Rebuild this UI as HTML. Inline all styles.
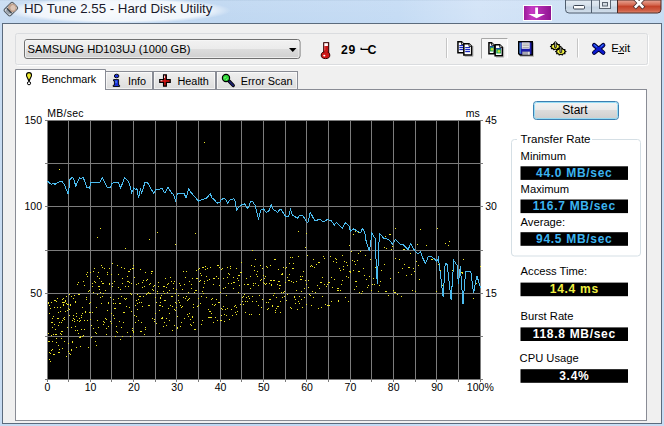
<!DOCTYPE html><html><head><meta charset="utf-8"><style>html,body{margin:0;padding:0;background:#c7dcf1;overflow:hidden}svg{display:block}text{font-family:"Liberation Sans",sans-serif}</style></head><body>
<svg width="664" height="426" viewBox="0 0 664 426">
<defs>
<linearGradient id="gFrame" x1="0" y1="0" x2="1" y2="0"><stop offset="0" stop-color="#c8dcf2"/><stop offset="0.33" stop-color="#bfd7f1"/><stop offset="0.6" stop-color="#c4dbf4"/><stop offset="0.72" stop-color="#d2e3f7"/><stop offset="0.85" stop-color="#cde0f5"/><stop offset="1" stop-color="#c6dcf3"/></linearGradient><linearGradient id="gFrameV" x1="0" y1="0" x2="0" y2="1"><stop offset="0" stop-color="#000" stop-opacity="0.02"/><stop offset="0.05" stop-color="#fff" stop-opacity="0.08"/><stop offset="1" stop-color="#fff" stop-opacity="0"/></linearGradient>
<radialGradient id="gGlow" cx="0.5" cy="0.5" r="0.5"><stop offset="0" stop-color="#ffffff" stop-opacity="0.9"/><stop offset="0.8" stop-color="#ffffff" stop-opacity="0.75"/><stop offset="1" stop-color="#ffffff" stop-opacity="0"/></radialGradient>
<linearGradient id="gCombo" x1="0" y1="0" x2="0" y2="1"><stop offset="0" stop-color="#f2f2f2"/><stop offset="0.5" stop-color="#ebebeb"/><stop offset="0.5" stop-color="#dddddd"/><stop offset="1" stop-color="#cfcfcf"/></linearGradient>
<linearGradient id="gTab" x1="0" y1="0" x2="0" y2="1"><stop offset="0" stop-color="#f0f0f0"/><stop offset="1" stop-color="#dcdcdc"/></linearGradient>
<linearGradient id="gBtn" x1="0" y1="0" x2="0" y2="1"><stop offset="0" stop-color="#f4f4f4"/><stop offset="0.5" stop-color="#e9e9e9"/><stop offset="0.5" stop-color="#dcdcdc"/><stop offset="1" stop-color="#cdcdcd"/></linearGradient>
<linearGradient id="gWB" x1="0" y1="0" x2="0" y2="1"><stop offset="0" stop-color="#e4ecf4"/><stop offset="0.45" stop-color="#d4dfea"/><stop offset="0.55" stop-color="#c2d1e0"/><stop offset="1" stop-color="#d2dfec"/></linearGradient>
<linearGradient id="gClose" x1="0" y1="0" x2="0" y2="1"><stop offset="0" stop-color="#e8a898"/><stop offset="0.35" stop-color="#d66c55"/><stop offset="0.5" stop-color="#c4432a"/><stop offset="0.8" stop-color="#cf5e45"/><stop offset="1" stop-color="#e08c74"/></linearGradient>
<linearGradient id="gPurple" x1="0" y1="0" x2="1" y2="0"><stop offset="0" stop-color="#9a1a98"/><stop offset="0.3" stop-color="#c63ac4"/><stop offset="1" stop-color="#8e1390"/></linearGradient>
</defs>
<rect width="664" height="426" fill="url(#gFrame)"/><rect width="664" height="24" fill="url(#gFrameV)"/>
<ellipse cx="117" cy="10.5" rx="114" ry="13" fill="url(#gGlow)"/>

<g transform="translate(10.85,9.1) rotate(45)">
<rect x="-4.4" y="-6.1" width="8.8" height="12.2" rx="1.6" fill="#dfe5ea" stroke="#535b63" stroke-width="1.1"/>
<rect x="-2.6" y="2.6" width="5.2" height="2.6" fill="#9aa2aa"/>
<circle cx="0.2" cy="-1.8" r="4.4" fill="#bea08c"/>
<circle cx="0.6" cy="-2.4" r="2.6" fill="#dcc4b4"/>
<rect x="-3.4" y="1.6" width="6.8" height="1.4" fill="#3b4249"/>
</g>
<text x="24" y="12.7" font-size="13.3" fill="#1a1a2a">HD Tune 2.55 - Hard Disk Utility</text>
<rect x="523.5" y="5.5" width="28" height="15" fill="url(#gPurple)" stroke="#ffffff" stroke-width="1"/>
<path d="M535.2 7.5h2.8v6.6h7.2l-8.6 4.2l-8.2-4.2h6.8z" fill="#ffffff"/>
<path d="M565.5 0 V9.5 q0 3.5 3.5 3.5 H591.5 V0z" fill="url(#gWB)" stroke="#4f5d6e" stroke-width="1"/>
<path d="M591.5 0 V13 H617.5 V0z" fill="url(#gWB)" stroke="#4f5d6e" stroke-width="1"/>
<path d="M617.5 0 V13 H657.5 q3.5 0 3.5-3.5 V0z" fill="url(#gClose)" stroke="#4a2a26" stroke-width="1"/>
<rect x="573.5" y="5.5" width="11" height="3.5" rx="1" fill="#ffffff" stroke="#3c4654" stroke-width="1"/>
<rect x="599.5" y="-1.5" width="11" height="10" fill="#e8eef4" stroke="#5a6470" stroke-width="1"/>
<rect x="602.5" y="2.5" width="5" height="3.5" fill="#d0d8e0" stroke="#5a6470" stroke-width="1"/>
<path d="M635.8 -0.5 L642.4 6.6 M642.4 -0.5 L635.8 6.6" stroke="#4a3030" stroke-width="4.2" stroke-linecap="square"/><path d="M635.8 -0.5 L642.4 6.6 M642.4 -0.5 L635.8 6.6" stroke="#ffffff" stroke-width="2.6" stroke-linecap="square"/>

<rect x="2.5" y="23.5" width="659" height="400" fill="#f0f0f0" stroke="#5b6b7d" stroke-width="1"/>
<rect x="16.5" y="34.5" width="632" height="31" rx="2" fill="none" stroke="#ffffff" stroke-width="1"/>
<rect x="15.5" y="33.5" width="632" height="31" rx="2" fill="#f0f0f0" stroke="#dadcdf" stroke-width="1"/>
<rect x="24.5" y="39.5" width="275.5" height="19" rx="2.5" fill="url(#gCombo)" stroke="#707070" stroke-width="1"/>
<rect x="25.5" y="40.5" width="273.5" height="17" rx="1.5" fill="none" stroke="#f8f8f8" stroke-width="1" opacity="0.7"/>
<text x="27.5" y="52.6" font-size="11.2" fill="#000">SAMSUNG HD103UJ (1000 GB)</text>
<path d="M289 48 h7.5 l-3.75 4z" fill="#000"/>
<rect x="323.7" y="42.7" width="5" height="11" fill="#c81818" stroke="#2a0000" stroke-width="1"/>
<rect x="324.3" y="43.2" width="3.6" height="2.8" fill="#ffffff"/>
<rect x="324.3" y="46" width="1" height="7" fill="#e86060"/>
<ellipse cx="325.5" cy="55.2" rx="4.3" ry="3.4" fill="#d01818" stroke="#2a0000" stroke-width="1"/>
<rect x="324.4" y="50" width="3.2" height="4" fill="#c81818"/>
<ellipse cx="324.3" cy="55.6" rx="1.1" ry="0.9" fill="#ffffff"/>
<text x="341" y="54" font-size="12.2" font-weight="bold" fill="#000" letter-spacing="0.6">29</text><path d="M360.5 50.1 v-2.3 h1.3 v1 h6.6 v1.3z" fill="#000"/><text x="367.6" y="54" font-size="12.4" font-weight="bold" fill="#000">C</text>
<rect x="446" y="38" width="1" height="20" fill="#c5c5c5"/><rect x="447" y="38" width="1" height="20" fill="#ffffff"/>
<rect x="577" y="38.5" width="1" height="19" fill="#c5c5c5"/><rect x="578" y="38.5" width="1" height="19" fill="#ffffff"/>
<path d="M473.00 45.9 v10.50 h-8.30" fill="none" stroke="#a0a0a0" stroke-width="1" opacity="0.7"/><path d="M457.95 41.85 h3.60 l2.7 2.7 v8.20 h-6.30z" fill="#ffffff" stroke="#000" stroke-width="1.5" stroke-linejoin="miter"/><path d="M461.55 41.85 v2.7 h2.7" fill="#d0d0d0" stroke="#000" stroke-width="0.8"/><rect x="459.3" y="45.0" width="3.8" height="1.2" fill="#1828c0"/><rect x="459.3" y="47.0" width="3.8" height="1.2" fill="#1828c0"/><rect x="459.3" y="49.0" width="3.8" height="1.2" fill="#1828c0"/>
<path d="M463.85 43.65 h5.10 l2.7 2.7 v8.70 h-7.80z" fill="#ffffff" stroke="#000" stroke-width="1.5" stroke-linejoin="miter"/><path d="M468.95 43.65 v2.7 h2.7" fill="#d0d0d0" stroke="#000" stroke-width="0.8"/><rect x="465.2" y="47.0" width="4.8" height="1.2" fill="#1828c0"/><rect x="465.2" y="49.0" width="4.8" height="1.2" fill="#1828c0"/><rect x="465.2" y="51.0" width="4.8" height="1.2" fill="#1828c0"/>
<rect x="481" y="38" width="27" height="20.5" fill="#f6f6f6"/><path d="M481.5 58.5 V38.5 H508" fill="none" stroke="#a8a8a8" stroke-width="1"/><path d="M507.5 38.5 V58" fill="none" stroke="#ffffff" stroke-width="1"/>
<path d="M503.70 46.9 v10.30 h-7.70" fill="none" stroke="#a0a0a0" stroke-width="1" opacity="0.7"/><path d="M488.95 42.65 h2.60 l2.7 2.7 v8.50 h-5.30z" fill="#ffffff" stroke="#000" stroke-width="1.5" stroke-linejoin="miter"/><path d="M491.55 42.65 v2.7 h2.7" fill="#d0d0d0" stroke="#000" stroke-width="0.8"/><rect x="490" y="46" width="3.4" height="5.5" fill="#28a860"/><rect x="490" y="46" width="3.4" height="1.3" fill="#1848a0"/><circle cx="492.10" cy="49.35" r="1.3" fill="#c8e030"/>
<path d="M495.15 44.65 h4.50 l2.7 2.7 v8.50 h-7.20z" fill="#ffffff" stroke="#000" stroke-width="1.5" stroke-linejoin="miter"/><path d="M499.65 44.65 v2.7 h2.7" fill="#d0d0d0" stroke="#000" stroke-width="0.8"/><rect x="496.2" y="48" width="4.8" height="5.5" fill="#28a860"/><rect x="496.2" y="48" width="4.8" height="1.3" fill="#1848a0"/><circle cx="499.00" cy="51.35" r="1.3" fill="#c8e030"/>
<path d="M533.5 42.5 V56.5 H520" fill="none" stroke="#b0b0b0" stroke-width="1" opacity="0.8"/>
<path d="M518.75 41.75 H532.25 V55 H520.2 L518.75 53.6z" fill="#1c1ca8" stroke="#000" stroke-width="1.5"/>
<rect x="519.6" y="42.6" width="1" height="11" fill="#58b8e8"/>
<rect x="521.7" y="42.4" width="8" height="6.4" fill="#e8e8e8"/>
<rect x="522.5" y="43.6" width="6.4" height="0.8" fill="#a0a0a0"/><rect x="522.5" y="45.3" width="6.4" height="0.8" fill="#a0a0a0"/><rect x="522.5" y="47" width="6.4" height="0.8" fill="#a0a0a0"/>
<rect x="522.3" y="51.6" width="7.7" height="3.2" fill="#a8a8b0"/><rect x="528" y="51.9" width="1.4" height="2.6" fill="#e0e0e0"/>
<polygon points="566.00,51.60 564.46,52.41 565.01,53.68 563.06,53.72 562.41,54.96 560.80,54.22 559.19,54.96 558.54,53.72 556.59,53.68 557.14,52.41 555.60,51.60 557.14,50.79 556.59,49.52 558.54,49.48 559.19,48.24 560.80,48.98 562.41,48.24 563.06,49.48 565.01,49.52 564.46,50.79" fill="#f0f040" stroke="#000" stroke-width="1.1" stroke-linejoin="round"/><path d="M559.90 52.40 V47.00 q0.9-1 1.8 0 V52.40z" fill="#b8b8a8" stroke="#000" stroke-width="0.8"/><polygon points="560.40,46.60 558.92,47.38 559.45,48.60 557.57,48.64 556.95,49.83 555.40,49.12 553.85,49.83 553.23,48.64 551.35,48.60 551.88,47.38 550.40,46.60 551.88,45.82 551.35,44.60 553.23,44.56 553.85,43.37 555.40,44.08 556.95,43.37 557.57,44.56 559.45,44.60 558.92,45.82" fill="#f0f040" stroke="#000" stroke-width="1.1" stroke-linejoin="round"/><path d="M554.50 47.40 V42.00 q0.9-1 1.8 0 V47.40z" fill="#b8b8a8" stroke="#000" stroke-width="0.8"/>
<g stroke-linecap="round"><path d="M594.2 45.2 L603.2 52.6 M603.2 45.2 L594.2 52.6" stroke="#000030" stroke-width="4.4"/><path d="M594.2 45.2 L603.2 52.6 M603.2 45.2 L594.2 52.6" stroke="#0c1ad0" stroke-width="2.6"/><path d="M594.4 44.9 L596.6 46.8 M603 44.9 L601 46.6" stroke="#58b8ff" stroke-width="0.8"/></g>
<text x="611.3" y="52.2" font-size="11.4" fill="#000">Exit</text>
<rect x="618" y="53" width="6" height="1" fill="#000"/>
<rect x="15.5" y="89.5" width="631" height="331" fill="#ffffff" stroke="#898c95" stroke-width="1"/>
<rect x="105.5" y="71.5" width="47.0" height="18" fill="url(#gTab)" stroke="#898c95" stroke-width="1"/>
<rect x="106.5" y="72.5" width="45.0" height="16" fill="none" stroke="#ffffff" stroke-width="1" opacity="0.6"/>
<text x="128" y="84.9" font-size="10.85" fill="#000">Info</text>
<rect x="153.5" y="71.5" width="62.0" height="18" fill="url(#gTab)" stroke="#898c95" stroke-width="1"/>
<rect x="154.5" y="72.5" width="60.0" height="16" fill="none" stroke="#ffffff" stroke-width="1" opacity="0.6"/>
<text x="177.5" y="84.9" font-size="10.85" fill="#000">Health</text>
<rect x="216.5" y="71.5" width="81.0" height="18" fill="url(#gTab)" stroke="#898c95" stroke-width="1"/>
<rect x="217.5" y="72.5" width="79.0" height="16" fill="none" stroke="#ffffff" stroke-width="1" opacity="0.6"/>
<text x="240.7" y="84.9" font-size="10.85" fill="#000">Error Scan</text>
<path d="M15.5 90 V69.5 H105.5 V90" fill="#ffffff" stroke="#898c95" stroke-width="1"/>
<rect x="16" y="70" width="89" height="21" fill="#ffffff"/>
<text x="41.6" y="82.5" font-size="10.8" fill="#000">Benchmark</text>
<path d="M29 72.6 c-1.7 0 -2.5 1.2 -2.5 2.6 c0 1.7 1.3 2.8 1.9 4.8 h1.2 c0.6-2 1.9-3.1 1.9-4.8 c0-1.4-0.8-2.6-2.5-2.6z" fill="#eeea30" stroke="#000" stroke-width="1.1"/>
<rect x="28.1" y="79.8" width="1.8" height="1.6" fill="#000"/>
<circle cx="29" cy="83.2" r="1.6" fill="#ffffff" stroke="#000" stroke-width="1"/>
<ellipse cx="116.6" cy="76" rx="2.3" ry="1.8" fill="#1a30d8" stroke="#000" stroke-width="0.9"/>
<path d="M113.6 79.6 h5 v5.6 h1 v1.3 h-6.4 v-1.3 h1.2 v-4.2 h-0.8z" fill="#1a30d8" stroke="#000" stroke-width="0.9"/>
<rect x="115.6" y="80.6" width="0.9" height="2.5" fill="#60b0ff"/>
<path d="M163.6 74.8 h2.7 v4.8 h3.9 v2.7 h-3.9 v3.9 h-2.7 v-3.9 h-3.8 v-2.7 h3.8z" fill="#e41414" stroke="#000" stroke-width="1.3"/><rect x="164" y="75.6" width="1" height="2.4" fill="#ffffff" opacity="0.8"/><rect x="160.4" y="80.2" width="2" height="1" fill="#ffffff" opacity="0.8"/>
<line x1="229" y1="81" x2="233.2" y2="85.4" stroke="#000" stroke-width="3.4" stroke-linecap="round"/>
<line x1="229" y1="81" x2="233.2" y2="85.4" stroke="#1c2270" stroke-width="1.8" stroke-linecap="round"/>
<circle cx="226" cy="78" r="3.6" fill="#30d838" stroke="#000" stroke-width="1.2"/>
<path d="M224.2 78.4 l1.4-1.6 M226.4 79.8 l1.2-1.2" stroke="#b0ffb0" stroke-width="0.9"/>
<rect x="47" y="120" width="434" height="260" fill="#000"/>
<path d="M47.5 120 V382M68.5 120 V382M90.5 120 V382M111.5 120 V382M133.5 120 V382M155.5 120 V382M176.5 120 V382M198.5 120 V382M220.5 120 V382M241.5 120 V382M263.5 120 V382M285.5 120 V382M306.5 120 V382M328.5 120 V382M350.5 120 V382M371.5 120 V382M393.5 120 V382M415.5 120 V382M436.5 120 V382M458.5 120 V382M480.5 120 V382M45 120.5 H483M45 163.5 H483M45 206.5 H483M45 250.5 H483M45 293.5 H483M45 336.5 H483M45 379.5 H483" stroke="#7c7c7c" stroke-width="1" fill="none"/>
<path d="M48 341h2v1h-2zM48 333h1v1h-1zM48 303h1v1h-1zM48 302h1v1h-1zM49 305h1v1h-1zM49 352h1v1h-1zM49 313h1v1h-1zM49 359h1v1h-1zM50 361h1v1h-1zM50 353h1v1h-1zM50 308h1v1h-1zM51 350h1v1h-1zM51 335h1v1h-1zM51 322h2v1h-2zM51 302h1v1h-1zM52 341h1v1h-1zM52 318h1v1h-1zM52 327h1v1h-1zM52 349h1v1h-1zM53 334h1v1h-1zM53 354h2v1h-2zM53 316h1v1h-1zM54 324h1v1h-1zM54 307h1v1h-1zM54 300h2v1h-2zM55 334h2v1h-2zM55 329h1v1h-1zM55 334h1v1h-1zM56 342h1v1h-1zM56 301h1v1h-1zM56 338h1v1h-1zM57 318h2v1h-2zM57 298h1v1h-1zM57 307h1v1h-1zM58 345h1v1h-1zM58 312h1v1h-1zM58 352h1v1h-1zM58 325h1v1h-1zM59 349h1v1h-1zM59 322h1v1h-1zM59 352h1v1h-1zM60 307h1v1h-1zM60 311h1v1h-1zM60 333h1v1h-1zM61 322h1v1h-1zM61 331h2v1h-2zM61 334h1v1h-1zM61 338h1v1h-1zM62 348h1v1h-1zM62 320h1v1h-1zM62 302h2v1h-2zM62 299h1v1h-1zM63 305h1v1h-1zM63 298h1v1h-1zM63 304h1v1h-1zM63 318h1v1h-1zM64 319h1v1h-1zM64 317h1v1h-1zM64 302h1v1h-1zM64 341h1v1h-1zM65 301h1v1h-1zM65 311h1v1h-1zM65 300h1v1h-1zM66 303h1v1h-1zM66 296h1v1h-1zM66 356h1v1h-1zM67 310h1v1h-1zM67 304h2v1h-2zM67 327h1v1h-1zM68 308h1v1h-1zM68 351h1v1h-1zM68 343h1v1h-1zM69 315h1v1h-1zM69 294h1v1h-1zM69 309h1v1h-1zM69 353h1v1h-1zM70 354h1v1h-1zM70 305h1v1h-1zM70 304h1v1h-1zM71 349h1v1h-1zM71 327h1v1h-1zM71 296h1v1h-1zM71 350h1v1h-1zM72 320h1v1h-1zM72 341h1v1h-1zM72 342h1v1h-1zM73 315h1v1h-1zM73 318h1v1h-1zM73 298h1v1h-1zM74 319h1v1h-1zM74 321h1v1h-1zM74 295h1v1h-1zM75 326h1v1h-1zM75 330h1v1h-1zM75 301h1v1h-1zM75 302h1v1h-1zM76 313h1v1h-1zM76 347h1v1h-1zM76 316h1v1h-1zM77 330h1v1h-1zM77 320h1v1h-1zM77 284h1v1h-1zM78 282h1v1h-1zM78 294h2v1h-2zM78 333h1v1h-1zM79 318h1v1h-1zM79 337h2v1h-2zM79 321h1v1h-1zM80 336h1v1h-1zM80 320h1v1h-1zM80 346h1v1h-1zM81 315h1v1h-1zM81 329h1v1h-1zM81 317h1v1h-1zM82 336h1v1h-1zM82 307h1v1h-1zM82 313h1v1h-1zM83 281h1v1h-1zM83 281h1v1h-1zM83 335h1v1h-1zM84 329h1v1h-1zM84 285h1v1h-1zM84 320h1v1h-1zM85 311h1v1h-1zM85 312h1v1h-1zM86 299h1v1h-1zM86 297h1v1h-1zM86 274h1v1h-1zM87 272h1v1h-1zM87 320h1v1h-1zM87 276h1v1h-1zM88 347h1v1h-1zM88 291h1v1h-1zM89 290h1v1h-1zM89 303h1v1h-1zM89 312h2v1h-2zM90 319h1v1h-1zM90 272h1v1h-1zM90 302h1v1h-1zM91 325h1v1h-1zM91 337h1v1h-1zM91 337h1v1h-1zM92 312h1v1h-1zM92 283h1v1h-1zM92 286h1v1h-1zM93 271h1v1h-1zM93 292h1v1h-1zM93 328h1v1h-1zM94 281h1v1h-1zM94 268h1v1h-1zM94 268h1v1h-1zM95 282h1v1h-1zM95 341h1v1h-1zM95 332h1v1h-1zM96 333h1v1h-1zM96 307h1v1h-1zM96 345h1v1h-1zM97 320h1v1h-1zM97 294h1v1h-1zM97 276h1v1h-1zM98 286h1v1h-1zM98 272h1v1h-1zM98 327h1v1h-1zM99 289h1v1h-1zM99 278h1v1h-1zM99 286h1v1h-1zM100 297h1v1h-1zM100 292h1v1h-1zM101 303h1v1h-1zM101 281h1v1h-1zM101 265h1v1h-1zM102 296h1v1h-1zM102 267h1v1h-1zM102 283h2v1h-2zM103 324h1v1h-1zM103 321h1v1h-1zM103 293h1v1h-1zM104 322h1v1h-1zM104 268h1v1h-1zM105 318h1v1h-1zM105 290h1v1h-1zM106 328h1v1h-1zM106 334h1v1h-1zM106 319h1v1h-1zM107 274h1v1h-1zM107 272h1v1h-1zM107 310h1v1h-1zM108 302h1v1h-1zM108 326h1v1h-1zM108 303h1v1h-1zM109 268h1v1h-1zM109 283h1v1h-1zM109 284h1v1h-1zM110 321h1v1h-1zM110 297h1v1h-1zM111 323h1v1h-1zM111 313h1v1h-1zM111 274h1v1h-1zM112 286h1v1h-1zM112 263h1v1h-1zM112 283h1v1h-1zM113 315h1v1h-1zM113 303h1v1h-1zM113 299h1v1h-1zM114 308h1v1h-1zM114 281h1v1h-1zM114 318h1v1h-1zM115 336h1v1h-1zM115 308h1v1h-1zM115 303h1v1h-1zM116 326h1v1h-1zM116 331h1v1h-1zM117 332h1v1h-1zM117 265h1v1h-1zM118 298h1v1h-1zM118 274h1v1h-1zM118 287h1v1h-1zM119 321h1v1h-1zM119 303h2v1h-2zM120 289h1v1h-1zM120 339h1v1h-1zM121 296h1v1h-1zM121 267h1v1h-1zM121 327h1v1h-1zM122 283h1v1h-1zM122 278h1v1h-1zM122 336h1v1h-1zM123 322h1v1h-1zM123 312h1v1h-1zM124 298h1v1h-1zM124 312h1v1h-1zM124 268h1v1h-1zM125 299h1v1h-1zM125 286h1v1h-1zM126 298h1v1h-1zM126 306h1v1h-1zM127 276h1v1h-1zM127 332h1v1h-1zM127 281h2v1h-2zM128 286h1v1h-1zM128 271h2v1h-2zM129 282h1v1h-1zM129 307h1v1h-1zM129 307h1v1h-1zM130 293h1v1h-1zM130 269h1v1h-1zM130 336h1v1h-1zM131 311h1v1h-1zM131 283h1v1h-1zM131 294h1v1h-1zM132 328h1v1h-1zM132 268h2v1h-2zM132 330h1v1h-1zM133 265h1v1h-1zM133 332h1v1h-1zM133 331h1v1h-1zM134 277h1v1h-1zM134 315h1v1h-1zM134 315h1v1h-1zM135 305h1v1h-1zM135 322h1v1h-1zM136 300h1v1h-1zM136 284h1v1h-1zM136 316h1v1h-1zM137 303h1v1h-1zM137 294h1v1h-1zM137 309h1v1h-1zM138 299h1v1h-1zM138 320h1v1h-1zM138 283h1v1h-1zM139 302h1v1h-1zM139 302h1v1h-1zM139 296h1v1h-1zM140 331h2v1h-2zM140 269h1v1h-1zM140 296h1v1h-1zM141 322h1v1h-1zM141 302h1v1h-1zM142 306h1v1h-1zM142 282h1v1h-1zM142 287h1v1h-1zM143 280h1v1h-1zM143 296h1v1h-1zM144 286h1v1h-1zM144 334h1v1h-1zM145 272h1v1h-1zM145 329h1v1h-1zM145 327h1v1h-1zM146 280h1v1h-1zM146 294h1v1h-1zM147 293h1v1h-1zM147 279h1v1h-1zM148 292h1v1h-1zM148 305h2v1h-2zM148 292h1v1h-1zM149 284h1v1h-1zM149 293h1v1h-1zM150 293h1v1h-1zM150 283h1v1h-1zM151 271h2v1h-2zM151 273h1v1h-1zM152 318h1v1h-1zM152 289h1v1h-1zM153 286h1v1h-1zM153 290h1v1h-1zM154 319h1v1h-1zM154 321h1v1h-1zM154 285h1v1h-1zM155 313h1v1h-1zM155 297h1v1h-1zM156 302h1v1h-1zM156 323h1v1h-1zM157 291h1v1h-1zM157 293h1v1h-1zM158 282h1v1h-1zM158 286h1v1h-1zM159 305h2v1h-2zM159 333h1v1h-1zM159 310h1v1h-1zM160 302h1v1h-1zM160 298h1v1h-1zM160 297h1v1h-1zM161 318h2v1h-2zM161 295h1v1h-1zM162 306h1v1h-1zM162 317h1v1h-1zM163 286h2v1h-2zM163 326h1v1h-1zM163 291h1v1h-1zM164 293h1v1h-1zM164 322h1v1h-1zM164 300h2v1h-2zM165 300h1v1h-1zM165 278h1v1h-1zM166 318h1v1h-1zM166 325h1v1h-1zM166 287h1v1h-1zM167 292h1v1h-1zM167 284h1v1h-1zM168 283h1v1h-1zM168 308h1v1h-1zM168 283h1v1h-1zM169 313h1v1h-1zM169 290h1v1h-1zM169 320h1v1h-1zM170 277h1v1h-1zM170 305h1v1h-1zM171 281h1v1h-1zM171 296h1v1h-1zM172 330h1v1h-1zM172 306h1v1h-1zM172 296h1v1h-1zM173 288h1v1h-1zM173 283h1v1h-1zM174 309h1v1h-1zM174 325h1v1h-1zM174 281h1v1h-1zM175 310h1v1h-1zM175 293h1v1h-1zM175 302h1v1h-1zM176 303h1v1h-1zM176 289h1v1h-1zM176 307h1v1h-1zM177 316h1v1h-1zM177 328h1v1h-1zM177 327h1v1h-1zM178 300h1v1h-1zM178 295h1v1h-1zM179 283h1v1h-1zM179 302h1v1h-1zM180 285h1v1h-1zM180 326h1v1h-1zM180 305h1v1h-1zM181 322h1v1h-1zM181 307h1v1h-1zM182 289h1v1h-1zM182 306h1v1h-1zM183 297h1v1h-1zM183 271h1v1h-1zM184 284h1v1h-1zM184 318h1v1h-1zM185 298h1v1h-1zM185 277h1v1h-1zM186 296h1v1h-1zM186 271h1v1h-1zM187 314h1v1h-1zM187 300h1v1h-1zM188 292h1v1h-1zM188 299h1v1h-1zM188 316h1v1h-1zM189 313h1v1h-1zM189 298h1v1h-1zM189 281h1v1h-1zM190 324h1v1h-1zM190 319h1v1h-1zM191 325h1v1h-1zM191 284h1v1h-1zM191 288h1v1h-1zM192 278h1v1h-1zM192 317h1v1h-1zM192 316h1v1h-1zM193 307h1v1h-1zM193 322h1v1h-1zM193 304h1v1h-1zM194 329h1v1h-1zM194 292h1v1h-1zM195 329h1v1h-1zM195 290h2v1h-2zM196 278h2v1h-2zM196 270h1v1h-1zM197 306h1v1h-1zM197 306h1v1h-1zM198 269h1v1h-1zM198 305h1v1h-1zM198 298h1v1h-1zM199 281h1v1h-1zM199 268h1v1h-1zM200 273h1v1h-1zM200 280h1v1h-1zM200 303h1v1h-1zM201 296h1v1h-1zM201 324h1v1h-1zM201 275h1v1h-1zM202 320h1v1h-1zM202 291h1v1h-1zM202 267h2v1h-2zM203 287h1v1h-1zM203 293h1v1h-1zM204 281h1v1h-1zM204 283h1v1h-1zM205 269h1v1h-1zM205 266h1v1h-1zM206 276h1v1h-1zM206 297h1v1h-1zM207 280h1v1h-1zM207 268h1v1h-1zM208 309h1v1h-1zM208 317h2v1h-2zM209 311h1v1h-1zM209 279h1v1h-1zM210 267h1v1h-1zM210 311h1v1h-1zM210 317h2v1h-2zM211 299h1v1h-1zM211 313h1v1h-1zM212 304h1v1h-1zM212 298h1v1h-1zM213 278h1v1h-1zM213 322h1v1h-1zM213 284h1v1h-1zM214 278h1v1h-1zM214 305h1v1h-1zM215 304h1v1h-1zM215 317h1v1h-1zM216 299h1v1h-1zM216 276h1v1h-1zM217 320h1v1h-1zM217 265h1v1h-1zM218 278h1v1h-1zM218 265h1v1h-1zM218 302h2v1h-2zM219 267h1v1h-1zM219 285h1v1h-1zM220 292h1v1h-1zM220 320h2v1h-2zM221 269h1v1h-1zM221 315h1v1h-1zM221 308h1v1h-1zM222 268h1v1h-1zM222 309h1v1h-1zM223 288h1v1h-1zM223 278h1v1h-1zM223 306h1v1h-1zM224 321h1v1h-1zM224 314h1v1h-1zM225 287h1v1h-1zM225 309h1v1h-1zM226 295h1v1h-1zM226 315h1v1h-1zM227 267h1v1h-1zM227 308h1v1h-1zM227 277h1v1h-1zM228 273h1v1h-1zM228 283h1v1h-1zM229 319h1v1h-1zM229 274h1v1h-1zM230 268h1v1h-1zM230 266h1v1h-1zM231 309h1v1h-1zM231 283h1v1h-1zM232 315h1v1h-1zM232 315h1v1h-1zM233 277h1v1h-1zM233 288h1v1h-1zM233 282h1v1h-1zM234 306h1v1h-1zM234 282h1v1h-1zM235 312h1v1h-1zM235 305h1v1h-1zM236 307h1v1h-1zM236 268h1v1h-1zM236 314h1v1h-1zM237 278h1v1h-1zM237 311h1v1h-1zM238 275h1v1h-1zM238 292h1v1h-1zM238 280h1v1h-1zM239 285h1v1h-1zM239 275h1v1h-1zM240 304h1v1h-1zM240 272h1v1h-1zM241 272h1v1h-1zM241 262h1v1h-1zM242 301h1v1h-1zM242 297h1v1h-1zM243 296h1v1h-1zM243 304h1v1h-1zM244 294h1v1h-1zM244 284h1v1h-1zM245 312h1v1h-1zM245 301h1v1h-1zM246 297h1v1h-1zM246 278h1v1h-1zM247 284h1v1h-1zM247 301h1v1h-1zM248 284h1v1h-1zM248 296h1v1h-1zM249 314h1v1h-1zM249 298h1v1h-1zM250 288h1v1h-1zM250 276h1v1h-1zM251 314h1v1h-1zM251 265h1v1h-1zM252 301h1v1h-1zM252 296h1v1h-1zM253 283h1v1h-1zM253 285h1v1h-1zM254 266h1v1h-1zM254 270h1v1h-1zM255 259h1v1h-1zM255 283h1v1h-1zM256 274h1v1h-1zM256 301h1v1h-1zM257 271h1v1h-1zM257 276h1v1h-1zM258 305h1v1h-1zM258 285h1v1h-1zM259 314h1v1h-1zM259 295h1v1h-1zM260 280h1v1h-1zM260 265h1v1h-1zM261 307h1v1h-1zM261 279h1v1h-1zM262 268h1v1h-1zM262 299h1v1h-1zM263 275h1v1h-1zM263 282h1v1h-1zM264 278h1v1h-1zM264 283h1v1h-1zM265 284h1v1h-1zM265 276h1v1h-1zM266 283h1v1h-1zM266 266h1v1h-1zM266 302h1v1h-1zM267 309h1v1h-1zM267 267h1v1h-1zM268 302h1v1h-1zM268 308h1v1h-1zM269 283h1v1h-1zM269 299h2v1h-2zM270 280h2v1h-2zM270 265h1v1h-1zM271 284h1v1h-1zM271 285h1v1h-1zM272 306h1v1h-1zM272 305h1v1h-1zM273 295h1v1h-1zM273 280h2v1h-2zM274 293h1v1h-1zM274 259h2v1h-2zM275 310h1v1h-1zM275 312h1v1h-1zM276 308h1v1h-1zM276 297h1v1h-1zM277 306h2v1h-2zM277 284h1v1h-1zM278 269h1v1h-1zM278 281h2v1h-2zM279 288h1v1h-1zM279 285h2v1h-2zM280 312h1v1h-1zM280 301h1v1h-1zM281 274h2v1h-2zM281 292h1v1h-1zM282 297h1v1h-1zM282 273h1v1h-1zM283 267h1v1h-1zM283 292h1v1h-1zM284 291h1v1h-1zM284 296h1v1h-1zM285 268h1v1h-1zM285 282h1v1h-1zM286 267h1v1h-1zM286 300h1v1h-1zM287 277h1v1h-1zM287 294h1v1h-1zM288 280h2v1h-2zM288 280h1v1h-1zM289 274h1v1h-1zM289 263h1v1h-1zM290 307h1v1h-1zM290 257h1v1h-1zM291 308h1v1h-1zM291 281h1v1h-1zM292 268h2v1h-2zM292 257h1v1h-1zM293 263h1v1h-1zM293 282h1v1h-1zM294 296h1v1h-1zM294 297h1v1h-1zM295 299h1v1h-1zM295 303h1v1h-1zM296 290h1v1h-1zM296 281h1v1h-1zM297 309h1v1h-1zM298 256h1v1h-1zM298 301h1v1h-1zM299 296h1v1h-1zM299 303h1v1h-1zM300 276h1v1h-1zM300 279h2v1h-2zM301 299h1v1h-1zM301 291h1v1h-1zM302 276h1v1h-1zM302 307h1v1h-1zM303 271h1v1h-1zM304 297h1v1h-1zM304 288h1v1h-1zM305 280h1v1h-1zM306 284h1v1h-1zM306 304h1v1h-1zM307 255h1v1h-1zM308 287h1v1h-1zM308 280h1v1h-1zM309 294h1v1h-1zM310 295h1v1h-1zM310 266h1v1h-1zM311 265h1v1h-1zM311 305h1v1h-1zM312 291h1v1h-1zM312 266h1v1h-1zM313 297h1v1h-1zM313 259h1v1h-1zM314 267h1v1h-1zM315 292h1v1h-1zM316 264h1v1h-1zM316 264h1v1h-1zM317 285h1v1h-1zM318 262h1v1h-1zM318 308h1v1h-1zM319 288h1v1h-1zM319 262h1v1h-1zM320 282h1v1h-1zM321 307h1v1h-1zM321 282h1v1h-1zM322 277h1v1h-1zM322 296h1v1h-1zM323 256h1v1h-1zM324 258h1v1h-1zM324 284h1v1h-1zM325 304h1v1h-1zM326 286h1v1h-1zM327 305h2v1h-2zM327 284h1v1h-1zM328 282h2v1h-2zM329 305h1v1h-1zM330 256h1v1h-1zM331 301h1v1h-1zM331 277h1v1h-1zM332 287h1v1h-1zM333 261h1v1h-1zM334 279h1v1h-1zM335 258h1v1h-1zM336 259h1v1h-1zM336 262h1v1h-1zM337 288h2v1h-2zM337 290h2v1h-2zM338 300h1v1h-1zM338 301h1v1h-1zM339 268h1v1h-1zM340 290h1v1h-1zM340 270h1v1h-1zM341 284h1v1h-1zM342 255h1v1h-1zM342 280h1v1h-1zM343 269h1v1h-1zM343 266h1v1h-1zM344 261h1v1h-1zM345 297h1v1h-1zM346 276h1v1h-1zM346 262h1v1h-1zM347 265h1v1h-1zM348 301h1v1h-1zM348 277h1v1h-1zM349 271h2v1h-2zM350 272h1v1h-1zM351 251h1v1h-1zM352 260h1v1h-1zM353 270h1v1h-1zM354 289h1v1h-1zM354 261h1v1h-1zM355 281h2v1h-2zM355 264h1v1h-1zM356 286h1v1h-1zM357 260h1v1h-1zM358 271h2v1h-2zM358 253h1v1h-1zM359 292h1v1h-1zM360 251h1v1h-1zM361 293h1v1h-1zM362 291h1v1h-1zM363 268h1v1h-1zM364 275h1v1h-1zM365 255h1v1h-1zM366 279h1v1h-1zM367 287h1v1h-1zM368 285h1v1h-1zM369 276h1v1h-1zM370 259h1v1h-1zM371 290h1v1h-1zM372 284h1v1h-1zM373 278h1v1h-1zM374 284h1v1h-1zM375 267h1v1h-1zM376 273h1v1h-1zM377 268h1v1h-1zM378 291h1v1h-1zM379 285h1v1h-1zM380 281h1v1h-1zM381 270h1v1h-1zM384 264h1v1h-1zM385 291h2v1h-2zM388 295h1v1h-1zM390 278h1v1h-1zM391 249h1v1h-1zM392 246h1v1h-1zM393 290h1v1h-1zM394 292h2v1h-2zM395 258h1v1h-1zM397 294h1v1h-1zM398 272h1v1h-1zM399 259h1v1h-1zM401 296h1v1h-1zM402 268h1v1h-1zM403 249h2v1h-2zM404 264h1v1h-1zM405 246h1v1h-1zM406 275h1v1h-1zM408 267h1v1h-1zM409 267h1v1h-1zM410 253h1v1h-1zM411 274h1v1h-1zM412 290h1v1h-1zM413 268h1v1h-1zM414 271h1v1h-1zM415 291h1v1h-1zM416 261h1v1h-1zM417 244h1v1h-1zM418 265h1v1h-1zM419 279h1v1h-1zM431 259h2v1h-2zM436 291h1v1h-1zM438 264h1v1h-1zM440 270h1v1h-1zM441 285h2v1h-2zM445 243h1v1h-1zM448 272h1v1h-1zM451 294h1v1h-1zM452 270h1v1h-1zM461 272h2v1h-2zM462 273h1v1h-1zM463 259h1v1h-1zM472 287h1v1h-1zM473 298h1v1h-1zM476 283h1v1h-1zM480 266h1v1h-1zM353 234h1v1h-1zM306 233h1v1h-1zM125 248h1v1h-1zM384 247h1v1h-1zM149 239h1v1h-1zM386 248h1v1h-1zM420 229h1v1h-1zM449 241h1v1h-1zM100 228h1v1h-1zM252 250h1v1h-1zM448 245h1v1h-1zM97 237h1v1h-1zM298 231h1v1h-1zM395 228h1v1h-1zM437 228h1v1h-1zM195 233h1v1h-1zM349 245h1v1h-1zM385 236h1v1h-1zM426 245h1v1h-1zM358 232h1v1h-1zM389 234h2v1h-2zM305 247h1v1h-1zM157 232h1v1h-1zM175 244h1v1h-1zM355 231h1v1h-1zM59 169h1v1h-1zM204 142h1v1h-1z" fill="#eee628"/>
<path d="M47.50,181.30 L49.50,183.00 L51.40,184.40 L53.25,183.10 L55.10,184.40 L57.60,182.50 L62.00,181.25 L64.50,185.00 L68.25,194.40 L70.10,178.75 L72.60,177.50 L73.90,179.40 L75.75,186.25 L79.50,177.50 L80.75,178.75 L83.25,177.50 L87.00,187.50 L89.50,188.10 L90.75,182.50 L99.50,182.50 L102.40,177.70 L107.00,186.90 L110.10,188.10 L112.00,183.10 L118.25,182.50 L120.75,188.10 L124.50,177.50 L128.25,181.25 L129.25,183.10 L131.75,193.10 L133.60,188.10 L135.50,189.40 L136.75,188.10 L138.60,197.50 L140.50,189.40 L141.75,193.10 L144.90,182.50 L147.40,182.50 L153.60,193.10 L156.10,189.40 L159.25,189.40 L161.75,188.10 L164.90,193.10 L168.00,187.50 L171.75,193.10 L173.60,194.40 L175.50,200.60 L177.40,193.75 L184.25,193.75 L186.10,198.10 L188.60,188.75 L190.50,191.90 L198.60,201.25 L201.75,199.40 L206.10,198.75 L210.25,193.75 L212.10,198.10 L214.00,199.40 L217.10,203.10 L219.60,202.50 L221.50,199.40 L224.60,198.10 L227.75,203.10 L229.60,200.00 L231.50,199.40 L234.00,198.75 L235.25,201.25 L236.50,210.00 L239.00,206.90 L241.50,205.00 L244.60,203.75 L247.75,208.75 L250.90,201.25 L252.75,201.90 L255.25,205.60 L258.40,218.75 L260.90,210.00 L263.40,208.75 L266.50,212.50 L269.00,210.60 L271.20,204.90 L273.30,209.80 L275.30,210.60 L277.40,212.40 L279.90,209.60 L281.50,209.80 L284.80,215.50 L286.40,216.80 L288.50,216.40 L290.50,209.80 L292.20,214.70 L294.70,216.40 L297.50,218.40 L299.20,215.50 L302.90,215.50 L306.20,221.30 L307.80,222.90 L310.30,212.30 L314.40,220.00 L317.50,220.00 L320.00,219.40 L323.10,221.90 L327.50,219.40 L331.25,220.60 L334.40,225.00 L336.25,222.50 L339.40,225.60 L342.50,228.10 L345.60,222.50 L348.75,225.60 L350.60,231.25 L353.75,228.75 L357.50,231.25 L360.60,232.50 L362.50,228.50 L364.60,231.50 L366.25,242.00 L369.40,251.40 L371.90,233.25 L375.00,238.25 L377.25,283.75 L379.40,233.25 L383.75,238.25 L388.75,239.50 L392.50,243.90 L395.60,239.50 L400.00,243.90 L403.75,245.10 L408.10,249.50 L410.60,243.90 L415.00,251.00 L417.50,253.75 L420.60,251.90 L423.10,258.75 L425.60,263.50 L428.10,256.90 L430.60,256.25 L434.40,258.75 L436.90,261.25 L438.40,257.90 L443.20,297.40 L445.20,263.20 L447.20,264.50 L451.10,300.00 L453.80,260.50 L457.00,265.10 L458.40,284.20 L460.30,266.40 L463.00,304.00 L465.60,271.70 L470.90,271.70 L473.50,293.40 L476.80,275.70 L480.70,288.20" stroke="#4cbcf0" stroke-width="1" fill="none" shape-rendering="crispEdges"/>
<text x="47.3" y="116.9" font-size="10.5" fill="#000" letter-spacing="0.25">MB/sec</text>
<text x="479.8" y="116.6" font-size="10.5" fill="#000" text-anchor="end">ms</text>
<text x="42" y="123.8" font-size="10.5" fill="#000" text-anchor="end">150</text>
<text x="42" y="210.2" font-size="10.5" fill="#000" text-anchor="end">100</text>
<text x="42" y="296.8" font-size="10.5" fill="#000" text-anchor="end">50</text>
<text x="485.2" y="123.8" font-size="10.5" fill="#000">45</text>
<text x="485.2" y="210.2" font-size="10.5" fill="#000">30</text>
<text x="485.2" y="296.8" font-size="10.5" fill="#000">15</text>
<text x="47.3" y="390.7" font-size="10.5" fill="#000" text-anchor="middle">0</text>
<text x="90.6" y="390.7" font-size="10.5" fill="#000" text-anchor="middle">10</text>
<text x="133.9" y="390.7" font-size="10.5" fill="#000" text-anchor="middle">20</text>
<text x="177.2" y="390.7" font-size="10.5" fill="#000" text-anchor="middle">30</text>
<text x="220.5" y="390.7" font-size="10.5" fill="#000" text-anchor="middle">40</text>
<text x="263.8" y="390.7" font-size="10.5" fill="#000" text-anchor="middle">50</text>
<text x="307.1" y="390.7" font-size="10.5" fill="#000" text-anchor="middle">60</text>
<text x="350.4" y="390.7" font-size="10.5" fill="#000" text-anchor="middle">70</text>
<text x="393.7" y="390.7" font-size="10.5" fill="#000" text-anchor="middle">80</text>
<text x="437.0" y="390.7" font-size="10.5" fill="#000" text-anchor="middle">90</text>
<text x="480.3" y="390.7" font-size="10.5" fill="#000" text-anchor="middle">100%</text>
<rect x="533.5" y="101.5" width="85" height="18" rx="3" fill="url(#gBtn)" stroke="#3c7fb1" stroke-width="1"/>
<rect x="534.5" y="102.5" width="83" height="16" rx="2" fill="none" stroke="#8fdcf6" stroke-width="1" opacity="0.9"/>
<text x="562.3" y="114" font-size="12" fill="#000">Start</text>
<path d="M517 139.5 H514.5 q-3 0 -3 3 V253 q0 3 3 3 H637.5 q3 0 3-3 V142.5 q0-3-3-3 H592" fill="none" stroke="#d5dfe5" stroke-width="1"/>
<text x="520.6" y="142.9" font-size="11.5" fill="#000">Transfer Rate</text>
<text x="520.6" y="160" font-size="11.2" fill="#000">Minimum</text>
<text x="520.6" y="192.8" font-size="11.2" fill="#000">Maximum</text>
<text x="520.6" y="226.1" font-size="11.2" fill="#000">Average:</text>
<text x="520.6" y="274.9" font-size="11.2" fill="#000">Access Time:</text>
<text x="520.6" y="319.8" font-size="11.2" fill="#000">Burst Rate</text>
<text x="519.6" y="361.8" font-size="11.2" fill="#000">CPU Usage</text>
<rect x="520.5" y="166.3" width="107.5" height="13.6" fill="#000"/>
<text x="574.3" y="177.0" font-size="12" font-weight="bold" fill="#3cb4f0" text-anchor="middle" letter-spacing="0.7">44.0 MB/sec</text>
<rect x="520.5" y="199.5" width="107.5" height="13.6" fill="#000"/>
<text x="574.3" y="210.2" font-size="12" font-weight="bold" fill="#3cb4f0" text-anchor="middle" letter-spacing="0.7">116.7 MB/sec</text>
<rect x="520.5" y="232.2" width="107.5" height="13.6" fill="#000"/>
<text x="574.3" y="242.9" font-size="12" font-weight="bold" fill="#3cb4f0" text-anchor="middle" letter-spacing="0.7">94.5 MB/sec</text>
<rect x="520.5" y="282.6" width="107.5" height="13.6" fill="#000"/>
<text x="574.3" y="293.3" font-size="12" font-weight="bold" fill="#f0f040" text-anchor="middle" letter-spacing="0.7">14.4 ms</text>
<rect x="520.5" y="327.4" width="107.5" height="13.6" fill="#000"/>
<text x="574.3" y="338.1" font-size="12" font-weight="bold" fill="#ffffff" text-anchor="middle" letter-spacing="0.7">118.8 MB/sec</text>
<rect x="520.5" y="369.2" width="107.5" height="13.6" fill="#000"/>
<text x="574.3" y="379.9" font-size="12" font-weight="bold" fill="#ffffff" text-anchor="middle" letter-spacing="0.7">3.4%</text>
</svg></body></html>
